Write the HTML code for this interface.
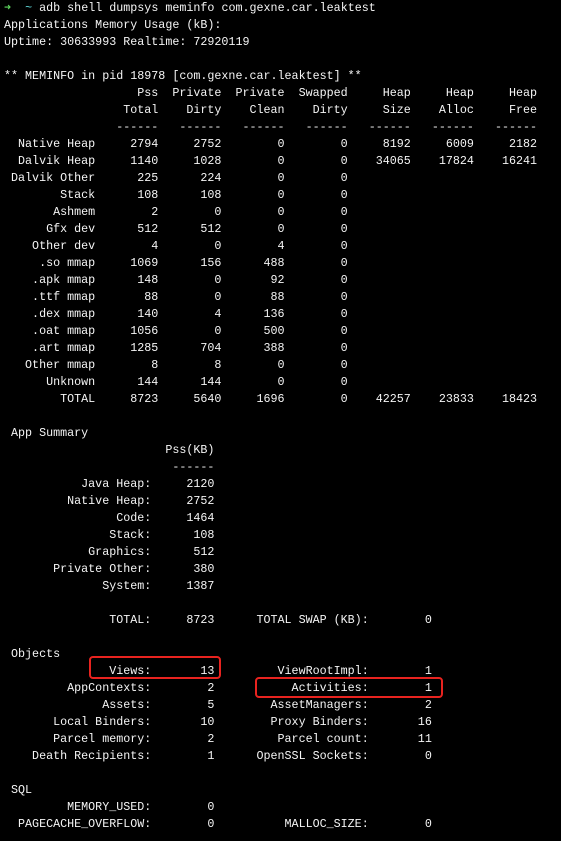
<!DOCTYPE html>
<html><head><meta charset="utf-8"><style>
html,body{margin:0;padding:0;background:#000;width:561px;height:841px;overflow:hidden}
pre{position:absolute;left:4px;top:0px;margin:0;font-family:"Liberation Mono",monospace;font-size:11.7px;line-height:17px;color:#f5f5f5}
.g{color:#5fd75f;font-weight:bold}.c{color:#5fd7d7}
.box{position:absolute;border:2px solid #e8231f;border-radius:4px}
</style></head><body>
<pre><span class="g">➜</span>  <span class="c">~</span> adb shell dumpsys meminfo com.gexne.car.leaktest
Applications Memory Usage (kB):
Uptime: 30633993 Realtime: 72920119

** MEMINFO in pid 18978 [com.gexne.car.leaktest] **
                   Pss  Private  Private  Swapped     Heap     Heap     Heap
                 Total    Dirty    Clean    Dirty     Size    Alloc     Free
                ------   ------   ------   ------   ------   ------   ------
  Native Heap     2794     2752        0        0     8192     6009     2182
  Dalvik Heap     1140     1028        0        0    34065    17824    16241
 Dalvik Other      225      224        0        0
        Stack      108      108        0        0
       Ashmem        2        0        0        0
      Gfx dev      512      512        0        0
    Other dev        4        0        4        0
     .so mmap     1069      156      488        0
    .apk mmap      148        0       92        0
    .ttf mmap       88        0       88        0
    .dex mmap      140        4      136        0
    .oat mmap     1056        0      500        0
    .art mmap     1285      704      388        0
   Other mmap        8        8        0        0
      Unknown      144      144        0        0
        TOTAL     8723     5640     1696        0    42257    23833    18423

 App Summary
                       Pss(KB)
                        ------
           Java Heap:     2120
         Native Heap:     2752
                Code:     1464
               Stack:      108
            Graphics:      512
       Private Other:      380
              System:     1387

               TOTAL:     8723      TOTAL SWAP (KB):        0

 Objects
               Views:       13         ViewRootImpl:        1
         AppContexts:        2           Activities:        1
              Assets:        5        AssetManagers:        2
       Local Binders:       10        Proxy Binders:       16
       Parcel memory:        2         Parcel count:       11
    Death Recipients:        1      OpenSSL Sockets:        0

 SQL
         MEMORY_USED:        0
  PAGECACHE_OVERFLOW:        0          MALLOC_SIZE:        0
</pre>
<div class="box" style="left:89px;top:656px;width:128px;height:19px"></div>
<div class="box" style="left:255px;top:677px;width:184px;height:17px"></div>
</body></html>
